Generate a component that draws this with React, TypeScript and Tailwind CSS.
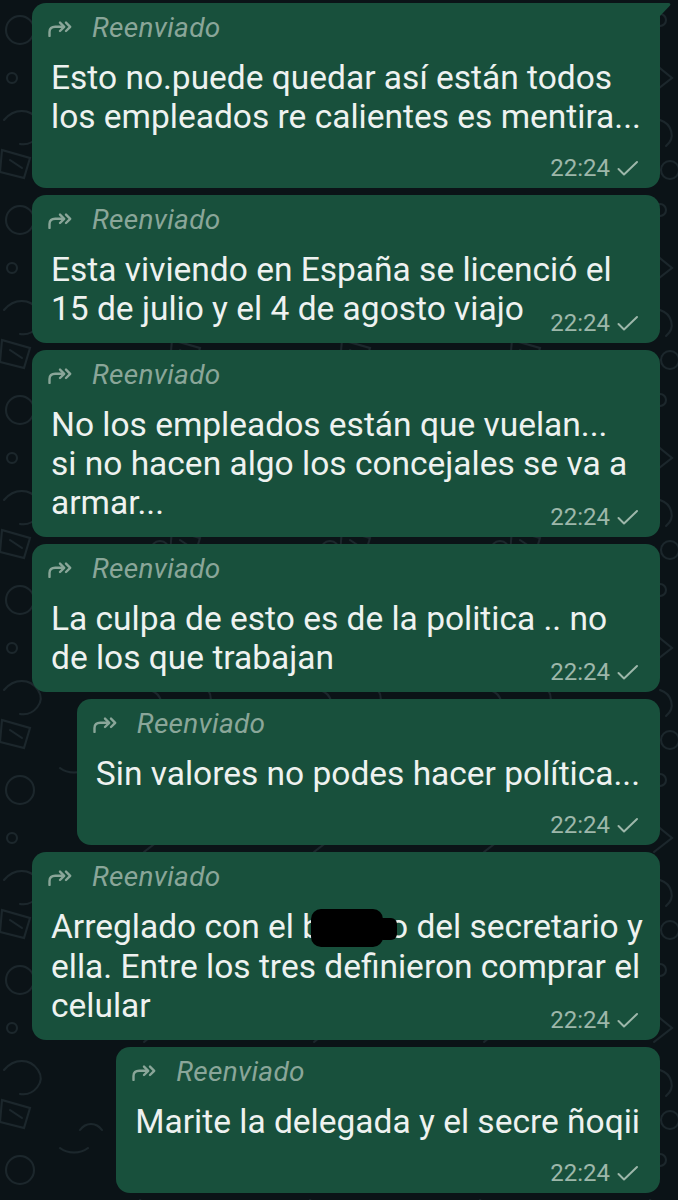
import type { ReactNode } from "react";

type Message = {
  lines: ReactNode[];
  inline: boolean;
  fit?: boolean;
  tail?: boolean;
};

function ForwardIcon() {
  return (
    <svg width="27" height="17" viewBox="0 0 27 17" fill="none" className="-ml-[4px] shrink-0">
      <path d="M2.5 16V12C2.5 8.3 4.6 6.8 8.2 6.8H15" stroke="#8aa699" strokeWidth="2.4" strokeLinecap="round" />
      <path d="M13 2.6L17.2 6.8L13 11" stroke="#8aa699" strokeWidth="2.4" strokeLinecap="round" strokeLinejoin="round" />
      <path d="M19 2.6L23.2 6.8L19 11" stroke="#8aa699" strokeWidth="2.4" strokeLinecap="round" strokeLinejoin="round" />
    </svg>
  );
}

function Check() {
  return (
    <svg width="24" height="17" viewBox="0 0 24 17" fill="none">
      <path d="M2.5 9L8 14.5L21 2" stroke="#9db7aa" strokeWidth="2" strokeLinecap="round" strokeLinejoin="round" />
    </svg>
  );
}

function Time() {
  return (
    <span className="flex shrink-0 items-center gap-[6px] text-[24px] leading-[28px] text-[#9db7aa]">
      22:24
      <Check />
    </span>
  );
}

function Redacted() {
  return (
    <span className="relative z-10 -ml-[10px] mr-[6px] inline-block h-[38px] w-[72px] rounded-[10px] bg-black align-[-9px]">
      <span className="absolute -right-[14px] top-[9px] h-[22px] w-[20px] rounded-[6px] bg-black" />
    </span>
  );
}

const messages: Message[] = [
  {
    lines: ["Esto no.puede quedar así están todos", "los empleados re calientes es mentira..."],
    inline: false,
    tail: true,
  },
  {
    lines: ["Esta viviendo en España se licenció el", "15 de julio y el 4 de agosto viajo"],
    inline: true,
  },
  {
    lines: ["No los empleados están que vuelan...", "si no hacen algo los concejales se va a", "armar..."],
    inline: true,
  },
  {
    lines: ["La culpa de esto es de la politica .. no", "de los que trabajan"],
    inline: true,
  },
  {
    lines: ["Sin valores no podes hacer política..."],
    inline: false,
    fit: true,
  },
  {
    lines: [
      <>
        Arreglado con el b<Redacted />o del secretario y
      </>,
      "ella. Entre los tres definieron comprar el",
      "celular",
    ],
    inline: true,
  },
  {
    lines: ["Marite la delegada y el secre ñoqii"],
    inline: false,
    fit: true,
  },
];

function Bubble({ msg }: { msg: Message }) {
  const last = msg.lines.length - 1;
  return (
    <div
      className={
        "relative rounded-[14px] bg-[#18503c] pb-[6px] pl-[19px] pr-[20px] pt-[10px] " +
        (msg.fit ? "self-end" : "w-full") +
        (msg.tail ? " rounded-tr-none" : "")
      }
    >
      {msg.tail && (
        <svg width="12" height="14" viewBox="0 0 12 14" className="absolute -right-[11px] top-0">
          <path d="M0 0H9.5C11.5 0 12 1.5 10.8 2.8L0 14Z" fill="#18503c" />
        </svg>
      )}
      {/* forwarded label */}
      <div className="flex h-[30px] items-center gap-[18px] text-[#8aa699]">
        <ForwardIcon />
        <span className="text-[28px] italic leading-[30px] tracking-[0.3px]">Reenviado</span>
      </div>

      <div className="mt-[15px] text-[33.5px] leading-[39px] text-[#eef2f0]">
        {msg.lines.map((line, i) =>
          i === last && msg.inline ? (
            <div key={i} className="flex items-end justify-between gap-[20px]">
              <span className="mb-[9px] whitespace-nowrap">{line}</span>
              <Time />
            </div>
          ) : (
            <div key={i} className="whitespace-nowrap">
              {line}
            </div>
          )
        )}
      </div>

      {!msg.inline && (
        <div className="mt-[18px] flex justify-end">
          <Time />
        </div>
      )}
    </div>
  );
}

function Doodles() {
  return (
    <svg className="absolute inset-0 h-full w-full" aria-hidden="true">
      <defs>
        <pattern id="doodle" width="170" height="190" patternUnits="userSpaceOnUse">
          <g fill="none" stroke="#1c272c" strokeWidth="2" strokeLinecap="round">
            <circle cx="20" cy="30" r="14" />
            <circle cx="12" cy="78" r="5" />
            <path d="M4 120c10-12 26-12 34 0s-4 26-18 24" />
            <path d="M2 150l28 8-6 20-24-6z" />
            <path d="M10 160l12 8" />
            <circle cx="150" cy="20" r="6" />
            <path d="M140 60l22 18-18 14" />
            <path d="M150 120c12 4 16 18 6 26" />
            <circle cx="160" cy="170" r="9" />
            <path d="M60 8c8 6 20 6 28 0" />
            <path d="M80 180c6-8 16-8 22 0" />
          </g>
        </pattern>
      </defs>
      <rect width="100%" height="100%" fill="url(#doodle)" />
    </svg>
  );
}

export default function App() {
  return (
    <div
      className="relative h-[1200px] w-[678px] overflow-hidden bg-[#0b1317]"
      style={{ fontFamily: "Roboto, 'Noto Sans', sans-serif" }}
    >
      <Doodles />
      <div className="relative flex flex-col gap-[7px] pl-[32px] pr-[18px] pt-[3px]">
        {messages.map((m, i) => (
          <Bubble key={i} msg={m} />
        ))}
      </div>
    </div>
  );
}
